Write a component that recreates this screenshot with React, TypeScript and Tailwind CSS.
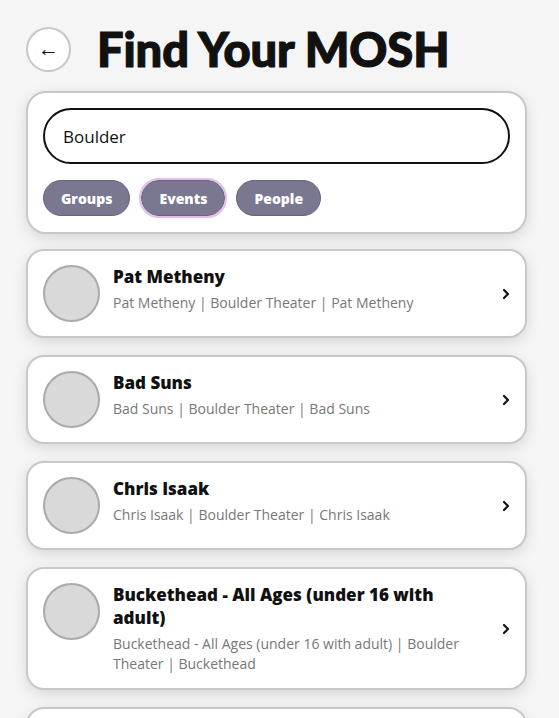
import { useState } from "react";

interface Result {
  title: string;
  subtitle: string;
}

const results: Result[] = [
  { title: "Pat Metheny", subtitle: "Pat Metheny | Boulder Theater | Pat Metheny" },
  { title: "Bad Suns", subtitle: "Bad Suns | Boulder Theater | Bad Suns" },
  { title: "Chris Isaak", subtitle: "Chris Isaak | Boulder Theater | Chris Isaak" },
  {
    title: "Buckethead - All Ages (under 16 with adult)",
    subtitle: "Buckethead - All Ages (under 16 with adult) | Boulder Theater | Buckethead",
  },
  { title: "Trampled by Turtles", subtitle: "Trampled by Turtles | Boulder Theater | Trampled by Turtles" },
];

const tabs = ["Groups", "Events", "People"];

const Chevron = () => (
  <svg width="8" height="12" viewBox="0 0 8 12" fill="none">
    <path d="M2 2l4 4-4 4" stroke="#111" strokeWidth="2.2" strokeLinecap="round" strokeLinejoin="round" />
  </svg>
);

const App = () => {
  const [query, setQuery] = useState("Boulder");
  const [active] = useState("Events");

  return (
    <div className="min-h-screen bg-[#f5f5f5] pl-[26px] pr-[32px] pt-[23px] font-['Open_Sans',sans-serif] text-[#111]">
      {/* Header */}
      <div className="flex items-center gap-[26px]">
        <button className="flex h-[45px] w-[45px] shrink-0 items-center justify-center rounded-full border-2 border-[#c8c8c8] bg-white pb-[2px] text-[21px] leading-none">
          ←
        </button>
        <h1 className="font-['Lato',sans-serif] text-[47px] font-black leading-[52px] tracking-[-0.1px] [-webkit-text-stroke:1.2px_#111]">
          Find Your MOSH
        </h1>
      </div>

      {/* Search card */}
      <div className="mt-[16px] rounded-[20px] border-2 border-[#c8c8c8] bg-white px-[15px] pt-[15px] pb-[16px] shadow-[0_4px_14px_rgba(0,0,0,0.12)]">
        <input
          value={query}
          onChange={(e) => setQuery(e.target.value)}
          autoFocus
          className="h-[56px] w-full rounded-full border-2 border-[#111] px-[18px] text-[17px] text-[#111] outline-none"
        />
        <div className="mt-[16px] flex gap-[11px]">
          {tabs.map((t) => (
            <button
              key={t}
              className={`h-[36px] rounded-full border border-[#66647c] bg-[#7a7891] px-[17px] text-[14px] font-extrabold text-white ${
                t === active ? "outline-2 outline-[#e7bdec]" : ""
              }`}
            >
              {t}
            </button>
          ))}
        </div>
      </div>

      {/* Results */}
      <div className="mt-[15px] flex flex-col gap-[17px] pb-6">
        {results.map((r, i) => (
          <div
            key={i}
            className="flex items-start rounded-[18px] border-2 border-[#c8c8c8] bg-white px-[15px] py-[14px] shadow-[0_4px_14px_rgba(0,0,0,0.12)]"
          >
            <div className="h-[57px] w-[57px] shrink-0 rounded-full border-2 border-[#aaaaaa] bg-[#d9d9d9]" />
            <div className="ml-[13px] min-w-0 flex-1">
              <p className="text-[17px] font-extrabold leading-[23px] text-[#111]">{r.title}</p>
              <p className="mt-[5px] text-[14px] leading-[20px] text-[#777]">{r.subtitle}</p>
            </div>
            <div className="ml-4 self-center">
              <Chevron />
            </div>
          </div>
        ))}
      </div>
    </div>
  );
};

export default App;
